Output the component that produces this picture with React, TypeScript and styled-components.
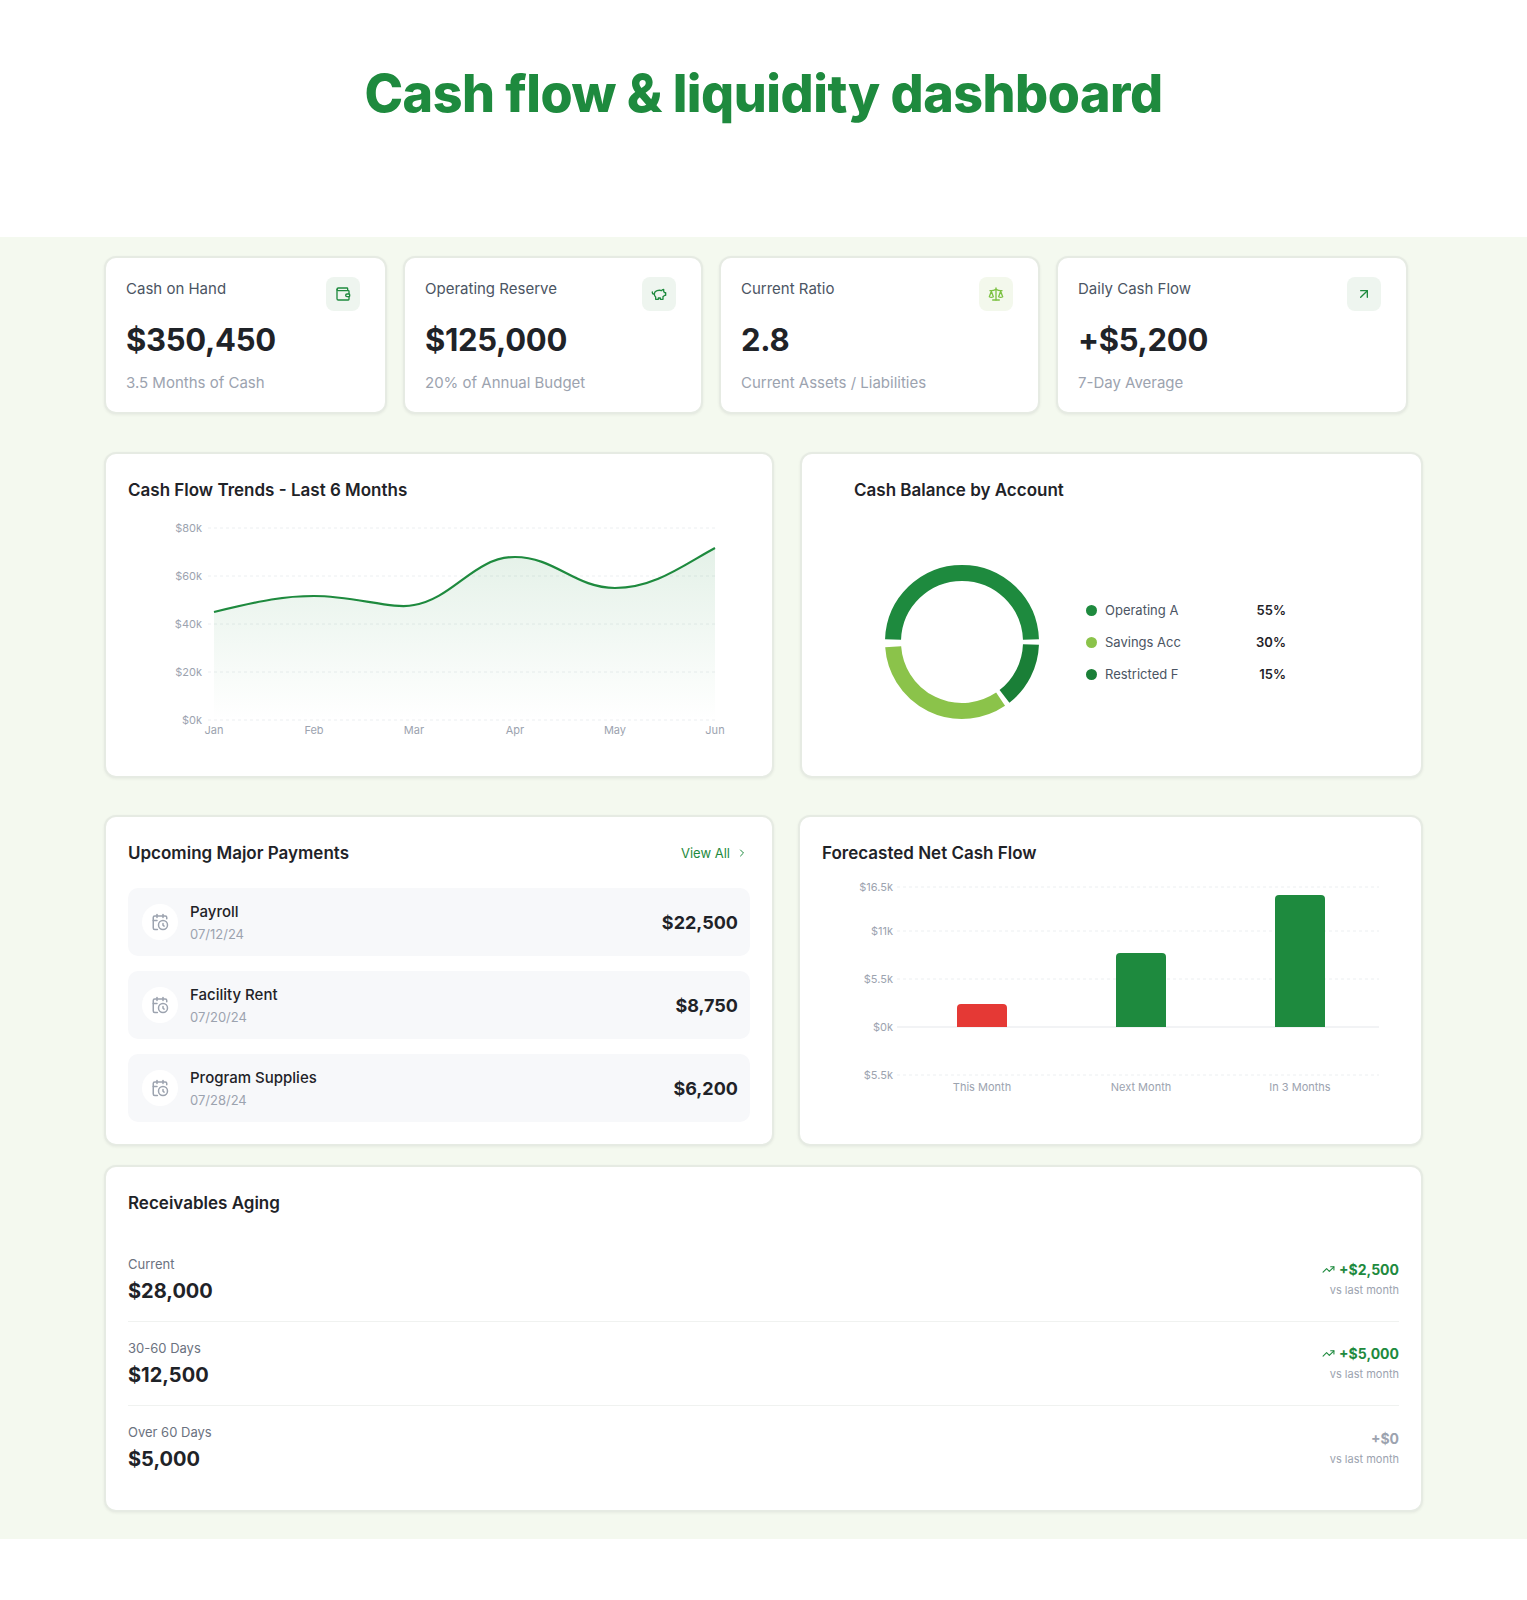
import styled, { createGlobalStyle } from 'styled-components';

const Global = createGlobalStyle`
  html { overflow-y: hidden; }
  body { margin: 0; font-family: Inter, "Liberation Sans", sans-serif; background: #fff; color: #1f2328; }
`;

const green = '#1e8a3e';

const Header = styled.header`
  height: 237px;
  display: flex;
  justify-content: center;
  padding-top: 62px;
  box-sizing: border-box;
`;

const Title = styled.h1`
  margin: 0;
  font-size: 52px;
  font-weight: 800;
  letter-spacing: -0.5px;
  color: ${green};
`;

const Band = styled.main`
  background: #f4f9ef;
  padding: 19px 0 56px;
  display: flex;
  justify-content: center;
`;

const Wrap = styled.div`
  width: 1319px;
  display: flex;
  flex-direction: column;
`;

const Card = styled.section`
  background: #fff;
  border: 2px solid #e6ebe3;
  border-radius: 12px;
  box-shadow: 0 1px 3px rgba(0,0,0,0.06);
  box-sizing: border-box;
`;

const StatRow = styled.div`
  display: grid;
  grid-template-columns: 283px 300px 321px 352px;
  column-gap: 16px;
  height: 158px;
`;

const StatCard = styled(Card)`
  padding: 20px 20px 0;
  position: relative;
`;

const StatLabel = styled.div`
  font-size: 15px;
  color: #4b5563;
  margin-top: 1px;
`;

const StatValue = styled.div`
  font-size: 31px;
  font-weight: 700;
  color: #1f2328;
  margin-top: 23px;
  letter-spacing: -0.3px;
`;

const StatSub = styled.div`
  font-size: 15px;
  color: #9ca3af;
  margin-top: 15px;
`;

const IconBox = styled.div<{ $light?: boolean }>`
  position: absolute;
  top: 19px;
  right: 25px;
  width: 34px;
  height: 34px;
  border-radius: 8px;
  background: ${p => (p.$light ? '#f3f8ec' : '#eef5ef')};
  color: ${p => (p.$light ? '#7cc142' : green)};
  display: flex;
  align-items: center;
  justify-content: center;
`;

const Row = styled.div<{ $cols: string; $h: number; $top: number; $gap?: number }>`
  display: grid;
  grid-template-columns: ${p => p.$cols};
  column-gap: ${p => p.$gap ?? 0}px;
  height: ${p => p.$h}px;
  margin-top: ${p => p.$top}px;
`;

const Panel = styled(Card)`
  padding: 26px 22px 20px;
  display: flex;
  flex-direction: column;
`;

const PanelTitle = styled.h2<{ $indent?: number }>`
  margin: 0 0 0 ${p => p.$indent ?? 0}px;
  font-size: 17px;
  font-weight: 600;
  color: #1f2328;
`;

const PanelHead = styled.div`
  display: flex;
  justify-content: space-between;
  align-items: center;
`;

const ViewAll = styled.a`
  font-size: 13px;
  color: ${green};
  display: flex;
  align-items: center;
  gap: 6px;
  margin-right: 2px;
`;

const Payments = styled.div`
  display: flex;
  flex-direction: column;
  gap: 15px;
  margin-top: 25px;
`;

const Payment = styled.div`
  height: 68px;
  background: #f7f8fa;
  border-radius: 10px;
  display: flex;
  align-items: center;
  padding: 0 12px 0 14px;
`;

const CalIcon = styled.div`
  width: 36px;
  height: 36px;
  border-radius: 50%;
  background: #fff;
  display: flex;
  align-items: center;
  justify-content: center;
  color: #9ca3af;
  margin-right: 12px;
`;

const PayName = styled.div`
  font-size: 15px;
  font-weight: 500;
  color: #1f2328;
`;

const PayDate = styled.div`
  font-size: 13px;
  color: #9ca3af;
  margin-top: 5px;
`;

const PayAmount = styled.div`
  margin-left: auto;
  font-size: 18px;
  font-weight: 700;
`;

const Legend = styled.div`
  display: grid;
  grid-template-columns: 150px 50px;
  row-gap: 16px;
  align-items: center;
  font-size: 13px;
`;

const LegendName = styled.div`
  display: flex;
  align-items: center;
  gap: 8px;
  color: #4b5563;
`;

const Dot = styled.span<{ $c: string }>`
  width: 11px;
  height: 11px;
  border-radius: 50%;
  background: ${p => p.$c};
`;

const LegendPct = styled.div`
  font-weight: 600;
  text-align: right;
  color: #1f2328;
`;

const DonutArea = styled.div`
  display: flex;
  align-items: center;
  gap: 44px;
  margin: 62px 0 0 58px;
`;

const AgingList = styled.div`
  display: flex;
  flex-direction: column;
  margin-top: 25px;
`;

const AgingItem = styled.div<{ $last?: boolean }>`
  display: flex;
  justify-content: space-between;
  align-items: center;
  padding: 10px 0 11px;
  border-bottom: ${p => (p.$last ? 'none' : '1px solid #f0f2f0')};
  height: 84px;
  box-sizing: border-box;
`;

const AgingLabel = styled.div`
  font-size: 13px;
  color: #6b7280;
`;

const AgingValue = styled.div`
  font-size: 20px;
  font-weight: 700;
  margin-top: 7px;
`;

const Delta = styled.div<{ $muted?: boolean }>`
  font-size: 14px;
  font-weight: 700;
  color: ${p => (p.$muted ? '#9ca3af' : green)};
  display: flex;
  align-items: center;
  justify-content: flex-end;
  gap: 4px;
`;

const DeltaSub = styled.div`
  font-size: 11px;
  color: #9ca3af;
  text-align: right;
  margin-top: 5px;
`;

const Ic = ({ children, size = 16 }: { children: React.ReactNode; size?: number }) => (
  <svg width={size} height={size} viewBox="0 0 24 24" fill="none" stroke="currentColor" strokeWidth={2} strokeLinecap="round" strokeLinejoin="round">
    {children}
  </svg>
);

const stats = [
  { label: 'Cash on Hand', value: '$350,450', sub: '3.5 Months of Cash', icon: <Ic><path d="M19 7V4a1 1 0 0 0-1-1H5a2 2 0 0 0 0 4h15a1 1 0 0 1 1 1v4h-3a2 2 0 0 0 0 4h3a1 1 0 0 0 1-1v-2a1 1 0 0 0-1-1" /><path d="M3 5v14a2 2 0 0 0 2 2h15a1 1 0 0 0 1-1v-4" /></Ic> },
  { label: 'Operating Reserve', value: '$125,000', sub: '20% of Annual Budget', icon: <Ic><path d="M19 5c-1.5 0-2.8 1.4-3 2-3.5-1.5-11-.3-11 5 0 1.8 0 3 2 4.5V20h4v-2h3v2h4v-4c1-.5 1.7-1 2-2h2v-4h-2c0-1-.5-1.5-1-2V5z" /><path d="M2 9v1c0 1.1.9 2 2 2h1" /></Ic> },
  { label: 'Current Ratio', value: '2.8', sub: 'Current Assets / Liabilities', light: true, icon: <Ic><path d="m16 16 3-8 3 8c-.87.65-1.92 1-3 1s-2.13-.35-3-1Z" /><path d="m2 16 3-8 3 8c-.87.65-1.92 1-3 1s-2.13-.35-3-1Z" /><path d="M7 21h10" /><path d="M12 3v18" /><path d="M3 7h2c2 0 5-1 7-2 2 1 5 2 7 2h2" /></Ic> },
  { label: 'Daily Cash Flow', value: '+$5,200', sub: '7-Day Average', icon: <Ic><path d="M7 17 17 7" /><path d="M7 7h10v10" /></Ic> },
];

const CalendarClock = () => (
  <Ic size={18}>
    <path d="M21 7.5V6a2 2 0 0 0-2-2H5a2 2 0 0 0-2 2v14a2 2 0 0 0 2 2h3.5" />
    <path d="M16 2v4" /><path d="M8 2v4" /><path d="M3 10h5" />
    <path d="M17.5 17.5 16 16.3V14" /><circle cx="16" cy="16" r="6" />
  </Ic>
);

const TrendUp = () => (
  <Ic size={13}><path d="m22 7-8.5 8.5-5-5L2 17" /><path d="M16 7h6v6" /></Ic>
);

function LineChart() {
  const xs = [86, 186, 286, 387, 487, 587];
  const path = 'M86,94 C136,82 156,78 186,78 C226,78 266,92 286,87 C326,80 346,39 387,39 C427,39 447,70 487,70 C527,70 557,46 587,30';
  const yLabels = [['$80k', 10], ['$60k', 58], ['$40k', 106], ['$20k', 154], ['$0k', 202]] as const;
  const months = ['Jan', 'Feb', 'Mar', 'Apr', 'May', 'Jun'];
  return (
    <svg width="620" height="224" viewBox="0 0 620 224" style={{ marginTop: 18 }}>
      <defs>
        <linearGradient id="lg" x1="0" y1="0" x2="0" y2="1">
          <stop offset="0" stopColor={green} stopOpacity="0.12" />
          <stop offset="1" stopColor={green} stopOpacity="0" />
        </linearGradient>
      </defs>
      {yLabels.map(([l, y]) => (
        <g key={l}>
          <line x1="80" x2="590" y1={y} y2={y} stroke="#eceff1" strokeDasharray="3 3" />
          <text x="74" y={y + 4} fontSize="11" fill="#9ca3af" textAnchor="end">{l}</text>
        </g>
      ))}
      <path d={path + ' L587,202 L86,202 Z'} fill="url(#lg)" />
      <path d={path} fill="none" stroke={green} strokeWidth="2.2" />
      {months.map((m, i) => (
        <text key={m} x={xs[i]} y="216" fontSize="11" fill="#9ca3af" textAnchor="middle">{m}</text>
      ))}
    </svg>
  );
}

function arc(cx: number, cy: number, r: number, a0: number, a1: number) {
  const p = (a: number) => [cx + r * Math.sin((a * Math.PI) / 180), cy - r * Math.cos((a * Math.PI) / 180)];
  const [x0, y0] = p(a0);
  const [x1, y1] = p(a1);
  return `M${x0},${y0} A${r},${r} 0 ${a1 - a0 > 180 ? 1 : 0} 1 ${x1},${y1}`;
}

function Donut() {
  const segs = [
    { a0: 272, a1: 448, c: green },
    { a0: 92, a1: 142, c: '#1a7f37' },
    { a0: 146, a1: 266, c: '#8bc34a' },
  ];
  return (
    <svg width="160" height="160" viewBox="0 0 160 160">
      {segs.map((s, i) => (
        <path key={i} d={arc(80, 80, 69, s.a0, s.a1)} fill="none" stroke={s.c} strokeWidth="16" />
      ))}
    </svg>
  );
}

function BarChart() {
  const grid = [['$16.5k', 10], ['$11k', 54], ['$5.5k', 102], ['$0k', 150], ['$5.5k', 198]] as const;
  const bars = [
    { x: 160, top: 127, c: '#e53935', l: 'This Month' },
    { x: 319, top: 76, c: green, l: 'Next Month' },
    { x: 478, top: 18, c: green, l: 'In 3 Months' },
  ];
  return (
    <svg width="580" height="226" viewBox="0 0 580 226" style={{ marginTop: 14 }}>
      {grid.map(([l, y], i) => (
        <g key={i}>
          <line x1="75" x2="557" y1={y} y2={y} stroke={i === 3 ? '#e5e7eb' : '#eceff1'} strokeDasharray={i === 3 ? undefined : '3 3'} />
          <text x="71" y={y + 4} fontSize="11" fill="#9ca3af" textAnchor="end">{l}</text>
        </g>
      ))}
      {bars.map(b => (
        <g key={b.l}>
          <path d={`M${b.x - 25},150 V${b.top + 4} q0,-4 4,-4 h42 q4,0 4,4 V150 Z`} fill={b.c} />
          <text x={b.x} y="214" fontSize="11" fill="#9ca3af" textAnchor="middle">{b.l}</text>
        </g>
      ))}
    </svg>
  );
}

const payments = [
  { name: 'Payroll', date: '07/12/24', amount: '$22,500' },
  { name: 'Facility Rent', date: '07/20/24', amount: '$8,750' },
  { name: 'Program Supplies', date: '07/28/24', amount: '$6,200' },
];

const aging = [
  { label: 'Current', value: '$28,000', delta: '+$2,500' },
  { label: '30-60 Days', value: '$12,500', delta: '+$5,000' },
  { label: 'Over 60 Days', value: '$5,000', delta: '+$0', muted: true },
];

export default function App() {
  return (
    <>
      <Global />
      <Header><Title>Cash flow &amp; liquidity dashboard</Title></Header>
      <Band>
        <Wrap>
          <StatRow>
            {stats.map(s => (
              <StatCard key={s.label}>
                <StatLabel>{s.label}</StatLabel>
                <StatValue>{s.value}</StatValue>
                <StatSub>{s.sub}</StatSub>
                <IconBox $light={s.light}>{s.icon}</IconBox>
              </StatCard>
            ))}
          </StatRow>

          <Row $cols="670px 623px" $h={326} $top={38} $gap={26}>
            <Panel>
              <PanelTitle>Cash Flow Trends - Last 6 Months</PanelTitle>
              <LineChart />
            </Panel>
            <Panel>
              <PanelTitle $indent={30}>Cash Balance by Account</PanelTitle>
              <DonutArea>
                <Donut />
                <Legend>
                  <LegendName><Dot $c={green} />Operating A</LegendName><LegendPct>55%</LegendPct>
                  <LegendName><Dot $c="#8bc34a" />Savings Acc</LegendName><LegendPct>30%</LegendPct>
                  <LegendName><Dot $c="#1a7f37" />Restricted F</LegendName><LegendPct>15%</LegendPct>
                </Legend>
              </DonutArea>
            </Panel>
          </Row>

          <Row $cols="670px 625px" $h={331} $top={37} $gap={24}>
            <Panel>
              <PanelHead>
                <PanelTitle>Upcoming Major Payments</PanelTitle>
                <ViewAll>View All <Ic size={12}><path d="m9 18 6-6-6-6" /></Ic></ViewAll>
              </PanelHead>
              <Payments>
                {payments.map(p => (
                  <Payment key={p.name}>
                    <CalIcon><CalendarClock /></CalIcon>
                    <div>
                      <PayName>{p.name}</PayName>
                      <PayDate>{p.date}</PayDate>
                    </div>
                    <PayAmount>{p.amount}</PayAmount>
                  </Payment>
                ))}
              </Payments>
            </Panel>
            <Panel>
              <PanelTitle>Forecasted Net Cash Flow</PanelTitle>
              <BarChart />
            </Panel>
          </Row>

          <Row $cols="1319px" $h={318} $top={19}>
            <Panel>
              <PanelTitle>Receivables Aging</PanelTitle>
              <AgingList>
                {aging.map((a, i) => (
                  <AgingItem key={a.label} $last={i === 2}>
                    <div>
                      <AgingLabel>{a.label}</AgingLabel>
                      <AgingValue>{a.value}</AgingValue>
                    </div>
                    <div>
                      <Delta $muted={a.muted}>{!a.muted && <TrendUp />}{a.delta}</Delta>
                      <DeltaSub>vs last month</DeltaSub>
                    </div>
                  </AgingItem>
                ))}
              </AgingList>
            </Panel>
          </Row>
        </Wrap>
      </Band>
    </>
  );
}
